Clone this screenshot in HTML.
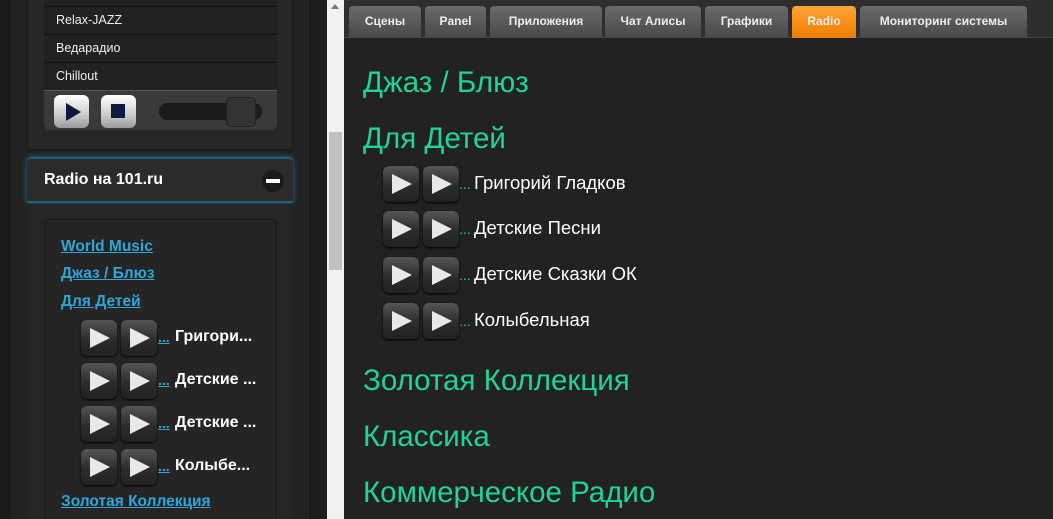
<!DOCTYPE html><html><head><meta charset="utf-8"><style>
*{box-sizing:border-box;margin:0;padding:0}
html,body{width:1053px;height:519px;overflow:hidden}
body{background:#232323;font-family:"Liberation Sans",sans-serif;position:relative}
.a{position:absolute}
.btn{position:absolute;width:36px;height:36px;border-radius:6px;background:linear-gradient(#555,#2c2c2c 55%,#222);box-shadow:0 1px 2px #000}
.btn svg{position:absolute;left:0;top:0}
.tab{position:absolute;top:6px;height:31px;background:linear-gradient(#6a6a6a,#4a4a4a);border-radius:4px 4px 0 0;color:#eee;font:bold 12px "Liberation Sans",sans-serif;text-align:center;line-height:31px}
.h{position:absolute;left:363px;color:#1fd39c;font-size:29.5px;font-family:"Liberation Sans",sans-serif}
.it{position:absolute;left:474px;color:#fff;font-size:18.5px}
.dots{position:absolute;left:459px;color:#1fd39c;font-size:14px}
.lk{position:absolute;left:61px;color:#2ea6d8;font-weight:bold;font-size:15.5px;text-decoration:underline}
.li{position:absolute;left:175px;color:#fff;font-weight:bold;font-size:16px}
.ld{position:absolute;left:158px;color:#2ea6d8;font-weight:bold;font-size:14px;text-decoration:underline}
</style></head><body>
<div class="a" style="left:0;top:0;width:11px;height:519px;background:#1c1c1c"></div>
<div class="a" style="left:11px;top:0;width:300px;height:519px;background:#222;border-right:1px solid #111"></div>
<div class="a" style="left:311px;top:0;width:16px;height:519px;background:#1d1d1d"></div>
<div class="a" style="left:27px;top:-10px;width:266px;height:160px;background:#272727;border:1px solid #1a1a1a;border-radius:5px"></div>
<div class="a" style="left:44px;top:0;width:233px;height:130px;background:#222;border-radius:0 0 6px 6px"></div>
<div class="a" style="left:44px;top:6px;width:233px;height:1px;background:#111"></div>
<div class="a" style="left:44px;top:34px;width:233px;height:1px;background:#111"></div>
<div class="a" style="left:44px;top:62px;width:233px;height:1px;background:#111"></div>
<div class="a" style="left:56px;top:13px;color:#eee;font-size:12.5px">Relax-JAZZ</div>
<div class="a" style="left:56px;top:41px;color:#eee;font-size:12.5px">Ведарадио</div>
<div class="a" style="left:56px;top:69px;color:#eee;font-size:12.5px">Chillout</div>
<div class="a" style="left:44px;top:90px;width:233px;height:40px;background:#3a3a3a;border-radius:0 0 6px 6px;border-top:1px solid #555"></div>
<div class="a" style="left:54px;top:95px;width:35px;height:33px;border-radius:6px;background:linear-gradient(#fff,#ccc 60%,#999)"><svg width="35" height="33"><polygon points="12,8 27,17 12,26" fill="#0c1a40"/></svg></div>
<div class="a" style="left:101px;top:95px;width:35px;height:33px;border-radius:6px;background:linear-gradient(#fff,#ccc 60%,#999)"><svg width="35" height="33"><rect x="10" y="9" width="14" height="14" fill="#0c1a40"/></svg></div>
<div class="a" style="left:159px;top:103px;width:103px;height:17px;background:#1c1c1c;border-radius:8px"></div>
<div class="a" style="left:226px;top:97px;width:30px;height:30px;background:#333;border:1px solid #222;border-radius:5px"></div>
<div class="a" style="left:27px;top:157px;width:266px;height:46px;background:#2b2b2b;border-top:2px solid #1f5f7a;border-bottom:2px solid #1f5f7a;box-shadow:0 0 6px #1f6f90;border-radius:5px 5px 0 0"></div>
<div class="a" style="left:44px;top:171px;color:#fff;font-weight:bold;font-size:16px">Radio на 101.ru</div>
<div class="a" style="left:262px;top:170px;width:22px;height:22px;border-radius:50%;background:#1a1a1a"><div class="a" style="left:4px;top:9px;width:14px;height:4px;background:#fff"></div></div>
<div class="a" style="left:27px;top:204px;width:266px;height:320px;background:#262626"></div>
<div class="a" style="left:44px;top:219px;width:233px;height:310px;background:#252525;border:1px solid #1a1a1a;border-radius:5px"></div>
<div class="lk" style="top:238px">World Music</div>
<div class="lk" style="top:265px">Джаз / Блюз</div>
<div class="lk" style="top:293px">Для Детей</div>
<div class="btn" style="left:81px;top:320px"></div><div class="btn" style="left:121px;top:320px"></div>
<div class="btn" style="left:81px;top:363px"></div><div class="btn" style="left:121px;top:363px"></div>
<div class="btn" style="left:81px;top:406px"></div><div class="btn" style="left:121px;top:406px"></div>
<div class="btn" style="left:81px;top:449px"></div><div class="btn" style="left:121px;top:449px"></div>
<div class="ld" style="top:329px">...</div><div class="li" style="top:328px">Григори...</div>
<div class="ld" style="top:372px">...</div><div class="li" style="top:371px">Детские ...</div>
<div class="ld" style="top:415px">...</div><div class="li" style="top:414px">Детские ...</div>
<div class="ld" style="top:458px">...</div><div class="li" style="top:457px">Колыбе...</div>
<div class="lk" style="top:493px">Золотая Коллекция</div>
<div class="a" style="left:327px;top:0;width:17px;height:519px;background:#f1f1f1"></div>
<div class="a" style="left:329px;top:132px;width:13px;height:138px;background:#c1c1c1"></div>
<div class="a" style="left:331px;top:4px;width:0;height:0;border-left:4px solid transparent;border-right:4px solid transparent;border-bottom:5px solid #777"></div>
<div class="a" style="left:344px;top:0;width:709px;height:519px;background:#222"></div>
<div class="a" style="left:344px;top:0;width:709px;height:38px;background:#2e2e2e;border-bottom:1px solid #444"></div>
<div class="tab" style="left:349px;width:72px">Сцены</div>
<div class="tab" style="left:425px;width:61px">Panel</div>
<div class="tab" style="left:490px;width:112px">Приложения</div>
<div class="tab" style="left:605px;width:96px">Чат Алисы</div>
<div class="tab" style="left:705px;width:83px">Графики</div>
<div class="tab" style="left:792px;width:64px;background:linear-gradient(#fca536,#f07c00);height:32px">Radio</div>
<div class="tab" style="left:860px;width:167px">Мониторинг системы</div>
<div class="h" style="top:66px">Джаз / Блюз</div>
<div class="h" style="top:122px">Для Детей</div>
<div class="btn" style="left:383px;top:166px"></div><div class="btn" style="left:423px;top:166px"></div>
<div class="btn" style="left:383px;top:211px"></div><div class="btn" style="left:423px;top:211px"></div>
<div class="btn" style="left:383px;top:257px"></div><div class="btn" style="left:423px;top:257px"></div>
<div class="btn" style="left:383px;top:303px"></div><div class="btn" style="left:423px;top:303px"></div>
<div class="dots" style="top:176px">...</div><div class="it" style="top:172px">Григорий Гладков</div>
<div class="dots" style="top:221px">...</div><div class="it" style="top:217px">Детские Песни</div>
<div class="dots" style="top:267px">...</div><div class="it" style="top:263px">Детские Сказки ОК</div>
<div class="dots" style="top:313px">...</div><div class="it" style="top:309px">Колыбельная</div>
<div class="h" style="top:364px">Золотая Коллекция</div>
<div class="h" style="top:420px">Классика</div>
<div class="h" style="top:476px">Коммерческое Радио</div>
<script>
document.querySelectorAll('.btn').forEach(b=>{b.innerHTML='<svg width="36" height="36"><polygon points="9,8 29,18 9,28" fill="#e8e8e8"/></svg>'});
</script>
</body></html>
